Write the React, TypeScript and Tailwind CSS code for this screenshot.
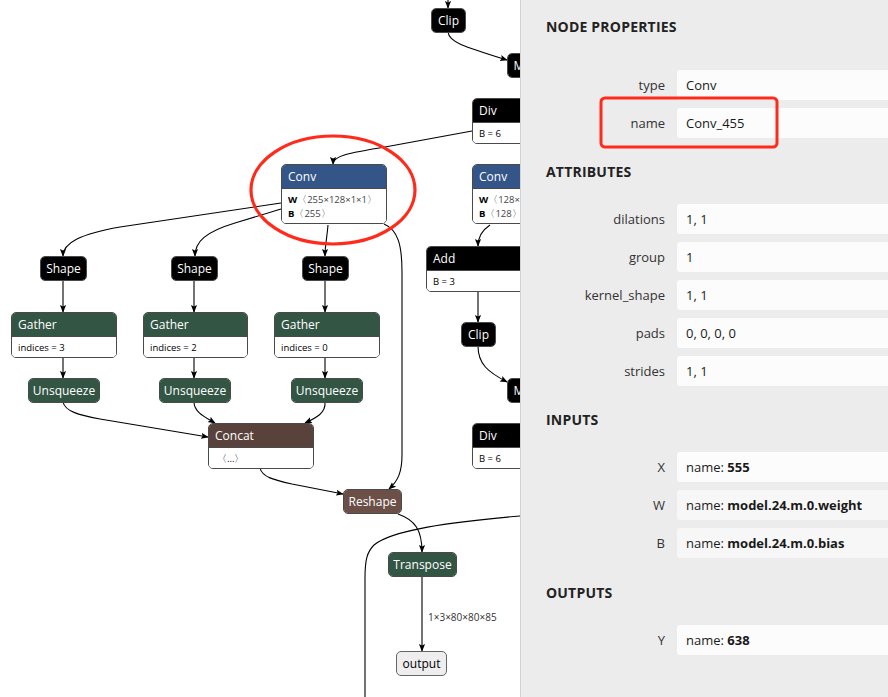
import React from 'react';

type NodeProps = {
  x: number;
  y: number;
  w: number;
  title: string;
  color: string;
  center?: boolean;
  children?: React.ReactNode;
};

// graph node, positioned on the free canvas
const Node: React.FC<NodeProps> = ({ x, y, w, title, color, center, children }) => (
  <div
    className="absolute rounded-[5px] border border-[#4a4a4a] overflow-hidden bg-white"
    style={{ left: x, top: y, width: w }}
  >
    <div
      className={`h-[23px] flex items-center text-white text-[12px] leading-none whitespace-nowrap ${center ? 'justify-center' : 'pl-[6px]'} ${color}`}
    >
      {title}
    </div>
    {children && (
      <div className="border-t border-[#4a4a4a] bg-white px-[6px] pt-[4px] pb-[2px] text-[9.5px] leading-[14px] text-black whitespace-nowrap">
        {children}
      </div>
    )}
  </div>
);

const Edges: React.FC = () => (
  <svg className="absolute inset-0" width={520} height={697}>
    <defs>
      <marker id="arrow" viewBox="0 0 10 10" refX="9" refY="5" markerWidth="7" markerHeight="7" orient="auto">
        <path d="M0,1 L10,5 L0,9 L2,5 z" fill="#000" />
      </marker>
    </defs>
    <g fill="none" stroke="#000" strokeWidth={1.1}>
      <path d="M448,0 L448,8" markerEnd="url(#arrow)" />
      <path d="M448,32 C449,42 462,46 507,60" markerEnd="url(#arrow)" />
      <path d="M472,131 L385,147 C348,153 333,156 333,164" markerEnd="url(#arrow)" />
      <path d="M490,225 C481,231 478,238 478,246" markerEnd="url(#arrow)" />
      <path d="M478,291 L478,322" markerEnd="url(#arrow)" />
      <path d="M478,346 C478,364 488,372 507,382" markerEnd="url(#arrow)" />
      <path d="M281,203 L120,227 C80,234 63,243 63,256" markerEnd="url(#arrow)" />
      <path d="M281,209 L235,223 C205,232 195,242 195,256" markerEnd="url(#arrow)" />
      <path d="M328,225 C327,238 325,245 325,256" markerEnd="url(#arrow)" />
      <path d="M384,224 C398,230 402,245 402,272 L402,455 C402,472 398,481 389,489" markerEnd="url(#arrow)" />
      <path d="M63,280 L63,312" markerEnd="url(#arrow)" />
      <path d="M194,280 L194,312" markerEnd="url(#arrow)" />
      <path d="M325,280 L325,312" markerEnd="url(#arrow)" />
      <path d="M63,357 L63,378" markerEnd="url(#arrow)" />
      <path d="M194,357 L194,378" markerEnd="url(#arrow)" />
      <path d="M325,357 L325,378" markerEnd="url(#arrow)" />
      <path d="M63,402 C65,411 78,415 100,419 L208,437" markerEnd="url(#arrow)" />
      <path d="M194,402 C194,412 205,417 215,423" markerEnd="url(#arrow)" />
      <path d="M325,402 C326,413 316,418 305,423" markerEnd="url(#arrow)" />
      <path d="M260,468 C262,477 274,480 292,484 L343,494" markerEnd="url(#arrow)" />
      <path d="M398,514 C415,520 422,530 422,552" markerEnd="url(#arrow)" />
      <path d="M422,577 L422,651" markerEnd="url(#arrow)" />
      <path d="M520,516 C450,522 392,530 374,545 C367,552 365,560 365,578 L365,697" />
    </g>
  </svg>
);

const Row: React.FC<{ label: string; shade?: boolean; children: React.ReactNode }> = ({ label, shade, children }) => (
  <div className="flex items-center h-[30px] pt-[2px]">
    <div className="w-[119px] text-right text-[13px] text-[#333]">{label}</div>
    <div className={`ml-[12px] flex-1 h-[30px] -mt-[2px] rounded-l-[3px] flex items-center pl-[9px] pt-[2px] text-[13px] text-[#1a1a1a] ${shade ? 'bg-[#f7f7f7]' : 'bg-[#fcfcfc]'}`}>
      {children}
    </div>
  </div>
);

const Heading: React.FC<{ children: React.ReactNode; className?: string }> = ({ children, className }) => (
  <div className={`h-[20px] leading-[22px] text-[14px] font-bold text-[#222] tracking-[0.2px] ${className ?? ''}`}>{children}</div>
);

const App: React.FC = () => {
  return (
    <div className="relative w-[888px] h-[697px] flex overflow-hidden bg-white" style={{ fontFamily: '"Open Sans", "Noto Sans", sans-serif' }}>
      {/* graph canvas */}
      <div className="relative w-[520px] h-full bg-white overflow-hidden shrink-0">
        <Edges />

        <Node x={431} y={8} w={35} title="Clip" color="bg-black" center />
        <Node x={507} y={53} w={34} title="Mul" color="bg-black" center />
        <Node x={472} y={98} w={70} title="Div" color="bg-black">
          <span>B = 6</span>
        </Node>

        <Node x={281} y={164} w={106} title="Conv" color="bg-[#335588]">
          <div><b>W</b><span className="text-[#444]">〈255×128×1×1〉</span></div>
          <div><b>B</b><span className="text-[#444]">〈255〉</span></div>
        </Node>

        <Node x={472} y={164} w={106} title="Conv" color="bg-[#335588]">
          <div><b>W</b><span className="text-[#444]">〈128×128×1×1〉</span></div>
          <div><b>B</b><span className="text-[#444]">〈128〉</span></div>
        </Node>

        <Node x={426} y={246} w={110} title="Add" color="bg-black">
          <span>B = 3</span>
        </Node>
        <Node x={461} y={322} w={35} title="Clip" color="bg-black" center />
        <Node x={507} y={378} w={34} title="Mul" color="bg-black" center />
        <Node x={472} y={423} w={70} title="Div" color="bg-black">
          <span>B = 6</span>
        </Node>

        <Node x={40} y={256} w={47} title="Shape" color="bg-black" center />
        <Node x={171} y={256} w={47} title="Shape" color="bg-black" center />
        <Node x={302} y={256} w={47} title="Shape" color="bg-black" center />

        <Node x={11} y={312} w={106} title="Gather" color="bg-[#335544]">
          <span>indices = 3</span>
        </Node>
        <Node x={143} y={312} w={105} title="Gather" color="bg-[#335544]">
          <span>indices = 2</span>
        </Node>
        <Node x={274} y={312} w={106} title="Gather" color="bg-[#335544]">
          <span>indices = 0</span>
        </Node>

        <Node x={28} y={378} w={72} title="Unsqueeze" color="bg-[#335544]" center />
        <Node x={159} y={378} w={72} title="Unsqueeze" color="bg-[#335544]" center />
        <Node x={291} y={378} w={72} title="Unsqueeze" color="bg-[#335544]" center />

        <Node x={208} y={423} w={106} title="Concat" color="bg-[#59423b]">
          <span className="pl-[2px]">〈...〉</span>
        </Node>

        <Node x={343} y={489} w={59} title="Reshape" color="bg-[#6c4f47]" center />
        <Node x={388} y={552} w={69} title="Transpose" color="bg-[#335544]" center />

        <div className="absolute left-[428px] top-[610px] text-[10px] text-[#333]">1×3×80×80×85</div>

        <div className="absolute left-[396px] top-[651px] w-[51px] h-[25px] rounded-[5px] border border-[#666] bg-[#eeeeee] flex items-center justify-center text-[12px] text-black">
          output
        </div>
      </div>

      {/* properties panel */}
      <div className="flex-1 h-full bg-[#ececec] border-l border-[#d2d2d2] pl-[25px] pt-[16px]">
        <Heading>NODE PROPERTIES</Heading>
        <div className="mt-[34px] flex flex-col gap-[8px]">
          <Row label="type">Conv</Row>
          <Row label="name">Conv_455</Row>
        </div>

        <Heading className="mt-[23px]">ATTRIBUTES</Heading>
        <div className="mt-[23px] flex flex-col gap-[8px]">
          <Row label="dilations">1, 1</Row>
          <Row label="group">1</Row>
          <Row label="kernel_shape">1, 1</Row>
          <Row label="pads">0, 0, 0, 0</Row>
          <Row label="strides">1, 1</Row>
        </div>

        <Heading className="mt-[23px]">INPUTS</Heading>
        <div className="mt-[23px] flex flex-col gap-[8px]">
          <Row label="X">name:&nbsp;<b>555</b></Row>
          <Row label="W" shade>name:&nbsp;<b>model.24.m.0.weight</b></Row>
          <Row label="B" shade>name:&nbsp;<b>model.24.m.0.bias</b></Row>
        </div>

        <Heading className="mt-[24px]">OUTPUTS</Heading>
        <div className="mt-[23px] flex flex-col gap-[8px]">
          <Row label="Y">name:&nbsp;<b>638</b></Row>
        </div>
      </div>

      {/* red annotations */}
      <svg className="absolute inset-0 pointer-events-none" width={888} height={697}>
        <ellipse cx={333} cy={190} rx={82} ry={54} fill="none" stroke="#ff2a1a" strokeWidth={3.2} />
        <rect x={601} y={98} width={176} height={49} rx={4} fill="none" stroke="#ff2a1a" strokeWidth={3} />
      </svg>
    </div>
  );
};

export default App;
